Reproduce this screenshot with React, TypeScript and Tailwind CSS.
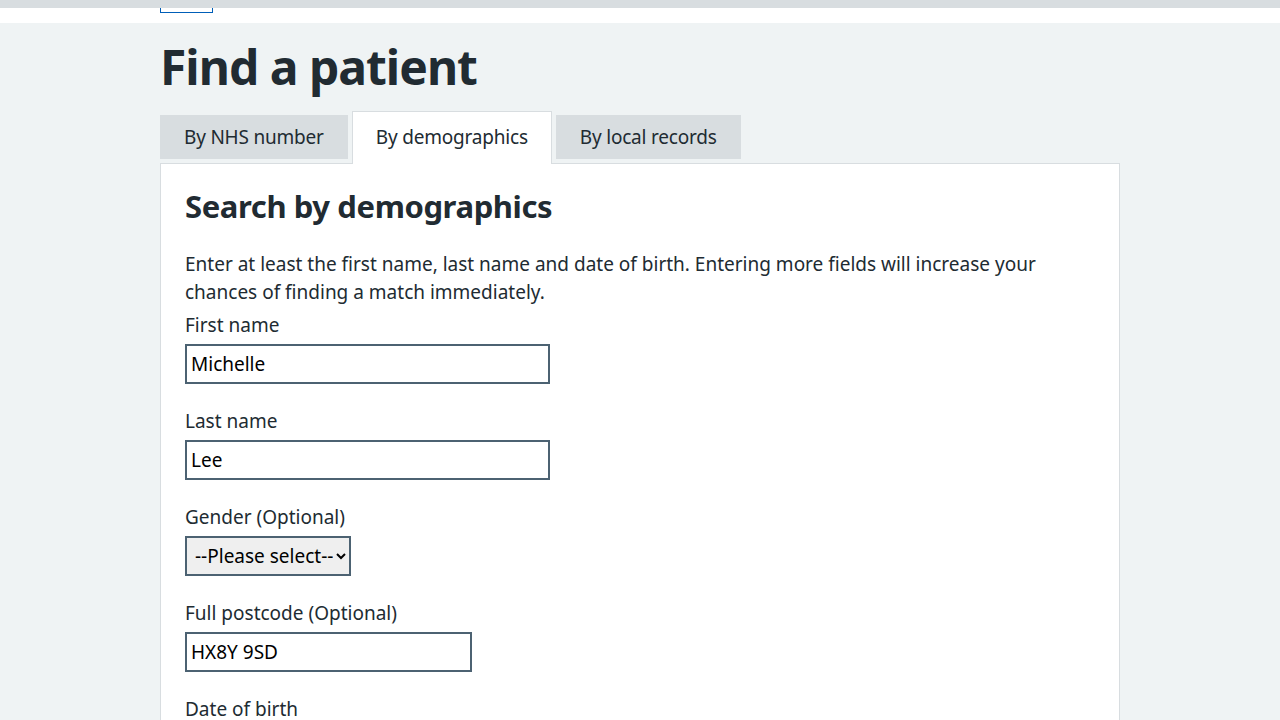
import React from 'react'

const FONT = 'font-["Noto_Sans",Lato,sans-serif]'

const tabs = [
  { label: 'By NHS number', active: false },
  { label: 'By demographics', active: true },
  { label: 'By local records', active: false },
]

const Field: React.FC<{ label: string; value: string; width: string }> = ({ label, value, width }) => (
  <div className="mb-[23px]">
    <label className="block text-[19px] leading-7 mb-[5px]">{label}</label>
    <input
      type="text"
      defaultValue={value}
      className={`${width} h-10 border-2 border-[#4c6272] bg-white px-1 text-[19px] text-black outline-none`}
    />
  </div>
)

export default function App() {
  return (
    <div className={`${FONT} min-h-screen bg-[#eff3f4] text-[#212b32]`}>
      <div className="h-2 bg-[#d8dde0]" />
      <div className="h-[15px] bg-white">
        <div className="mx-auto w-[960px]">
          <div className="h-[5px] w-[53px] border-x border-b border-[#005eb8]" />
        </div>
      </div>

      <main className="mx-auto w-[960px] pt-4">
        <h1 className="text-[48px] leading-[56px] font-bold tracking-[-1px]">Find a patient</h1>

        <div className="mt-4 flex items-start gap-1 tracking-[-0.2px]">
          {tabs.map((t) =>
            t.active ? (
              <div
                key={t.label}
                className="relative z-10 -mb-px h-[53px] border border-b-0 border-[#d8dde0] bg-white px-[23px] pt-[3px]"
              >
                <div className="flex h-11 items-center text-[19px]">{t.label}</div>
              </div>
            ) : (
              <div key={t.label} className="mt-1 flex h-11 items-center bg-[#d8dde0] px-6 text-[19px]">
                {t.label}
              </div>
            )
          )}
        </div>

        <section className="border border-[#d8dde0] bg-white px-6 pt-[22px] pb-6">
          <h2 className="text-[31px] leading-10 font-bold tracking-[-0.4px]">Search by demographics</h2>
          <p className="mt-6 text-[19px] leading-7">
            Enter at least the first name, last name and date of birth. Entering more fields will increase your
            chances of finding a match immediately.
          </p>
          <div className="mt-[5px]">
            <Field label="First name" value="Michelle" width="w-[365px]" />
            <Field label="Last name" value="Lee" width="w-[365px]" />
            <div className="mb-[23px]">
              <label className="block text-[19px] leading-7 mb-[5px]">Gender (Optional)</label>
              <select className="h-10 w-[166px] border-2 border-[#4c6272] bg-[#efefef] pl-1 text-[19px] text-black">
                <option>--Please select--</option>
                <option>Male</option>
                <option>Female</option>
              </select>
            </div>
            <Field label="Full postcode (Optional)" value="HX8Y 9SD" width="w-[287px]" />
            <div className="mb-6">
              <label className="block text-[19px] leading-7 mb-[5px]">Date of birth</label>
              <div className="flex gap-4">
                <input className="h-10 w-[60px] border-2 border-[#4c6272] bg-white" />
                <input className="h-10 w-[60px] border-2 border-[#4c6272] bg-white" />
                <input className="h-10 w-[90px] border-2 border-[#4c6272] bg-white" />
              </div>
            </div>
          </div>
        </section>
      </main>
    </div>
  )
}
